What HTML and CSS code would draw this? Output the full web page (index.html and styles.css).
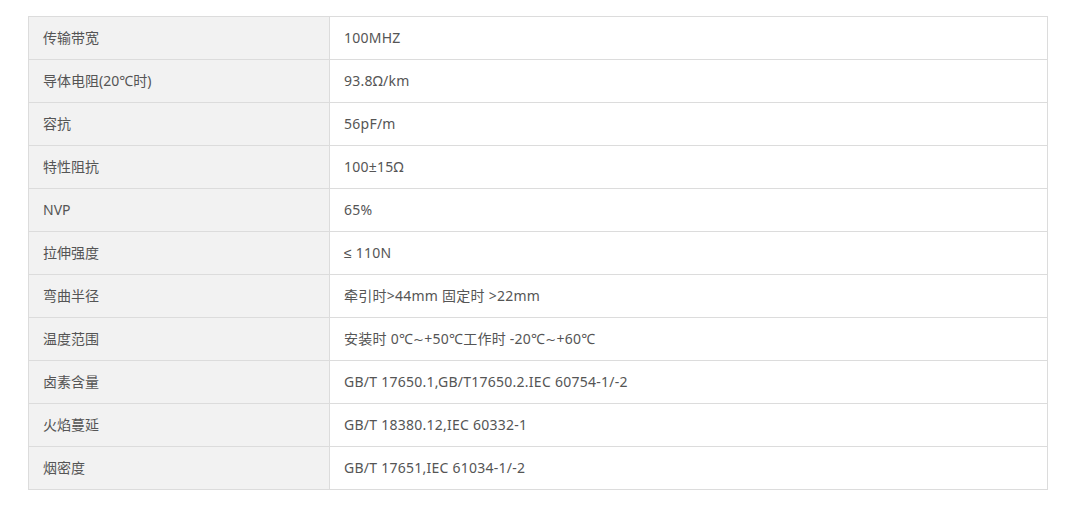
FILE: index.html
```html
<!DOCTYPE html>
<html lang="zh">
<head>
<meta charset="utf-8">
<link rel="stylesheet" href="styles.css">
</head>
<body>
<div class="wrap">
<table class="spec">
<tbody>
<tr><td class="k">传输带宽</td><td class="v">100MHZ</td></tr>
<tr><td class="k">导体电阻(20℃时)</td><td class="v">93.8Ω/km</td></tr>
<tr><td class="k">容抗</td><td class="v">56pF/m</td></tr>
<tr><td class="k">特性阻抗</td><td class="v">100±15Ω</td></tr>
<tr><td class="k">NVP</td><td class="v">65%</td></tr>
<tr><td class="k">拉伸强度</td><td class="v"><span class="le">≤</span> 110N</td></tr>
<tr><td class="k">弯曲半径</td><td class="v">牵引时&gt;44mm 固定时 &gt;22mm</td></tr>
<tr><td class="k">温度范围</td><td class="v">安装时 0℃<span class="tl">~</span>+50℃工作时 -20℃<span class="tl">~</span>+60℃</td></tr>
<tr><td class="k">卤素含量</td><td class="v">GB/T 17650.1,GB/T17650.2.IEC 60754-1/-2</td></tr>
<tr><td class="k">火焰蔓延</td><td class="v">GB/T 18380.12,IEC 60332-1</td></tr>
<tr><td class="k">烟密度</td><td class="v">GB/T 17651,IEC 61034-1/-2</td></tr>
</tbody>
</table>
</div>
</body>
</html>
```
FILE: styles.css
```css
html, body {
  margin: 0;
  padding: 0;
  background: #fff;
}
.wrap {
  padding: 16px 0 0 28px;
}
.spec {
  width: 1020px;
  border-collapse: collapse;
  font-family: "Noto Sans", "Noto Sans CJK SC", sans-serif;
  font-size: 14px;
  color: #555;
}
.spec td {
  border: 1px solid #dcdcdc;
  height: 43px;
  padding: 0 14px;
  box-sizing: border-box;
  vertical-align: middle;
  line-height: 20px;
}
.spec td.k {
  width: 301px;
  background: #f2f2f2;
}
.spec td.v {
  background: #fff;
  letter-spacing: 0.25px;
}
.spec .tl {
  font-family: "DejaVu Sans", sans-serif;
  font-size: 13px;
}
.spec .le {
  font-family: "Liberation Sans", "DejaVu Sans", sans-serif;
}
```
